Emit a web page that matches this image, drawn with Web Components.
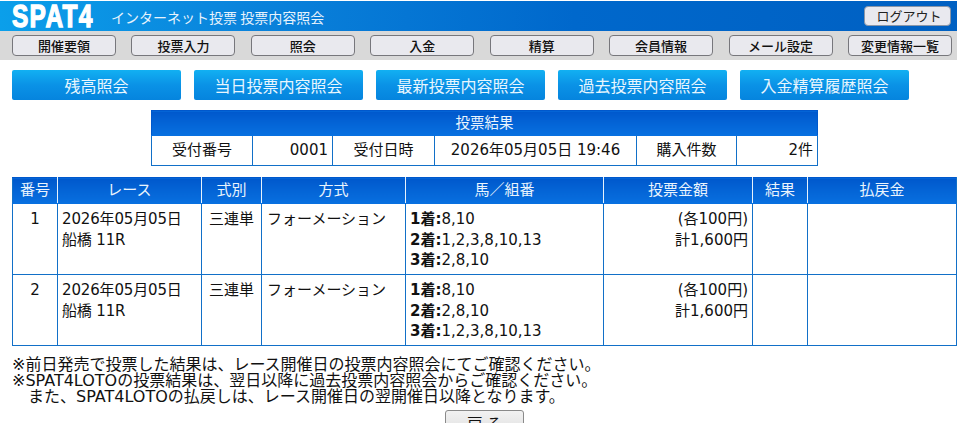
<!DOCTYPE html>
<html lang="ja"><head><meta charset="utf-8"><title>投票内容照会</title>
<style>
html,body{margin:0;padding:0;background:#fff}
body{font-family:"DejaVu Sans","Noto Sans CJK JP",sans-serif;color:#111}
</style></head><body>
<spat-page>
  <spat-header slot="header" title-text="インターネット投票 投票内容照会"></spat-header>
  <spat-nav slot="nav">
    <nav-btn>開催要領</nav-btn><nav-btn>投票入力</nav-btn><nav-btn>照会</nav-btn><nav-btn>入金</nav-btn>
    <nav-btn>精算</nav-btn><nav-btn>会員情報</nav-btn><nav-btn>メール設定</nav-btn><nav-btn>変更情報一覧</nav-btn>
  </spat-nav>
  <sub-nav slot="sub">
    <blue-btn>残高照会</blue-btn><blue-btn>当日投票内容照会</blue-btn><blue-btn>最新投票内容照会</blue-btn>
    <blue-btn>過去投票内容照会</blue-btn><blue-btn>入金精算履歴照会</blue-btn>
  </sub-nav>
  <result-summary slot="summary"></result-summary>
  <bet-table slot="bets"></bet-table>
  <note-list slot="notes"></note-list>
  <back-btn slot="back">戻 る</back-btn>
</spat-page>
<script>
const def=(name,html,init)=>customElements.define(name,class extends HTMLElement{
  constructor(){super();this.attachShadow({mode:'open'}).innerHTML=html;}
  connectedCallback(){init&&init(this);}
});
def('spat-page',`<style>
:host{display:block;width:957px;height:423px;overflow:hidden}
.s{display:flex;justify-content:center;margin-top:5px;padding-left:12px}
</style>
<slot name="header"></slot><slot name="nav"></slot><slot name="sub"></slot><slot name="summary"></slot><slot name="bets"></slot><slot name="notes"></slot>
<div class="s"><slot name="back"></slot></div>`);
def('spat-header',`<style>
:host{display:flex;align-items:center;height:30px;margin-top:1px;padding:0 6px 0 12px;box-sizing:border-box;
background:linear-gradient(90deg,#0b9fea 0,#0a84dc 25%,#0068cc 60%,#0060c2 100%);color:#fff}
.logo{font:bold 26px/30px "Liberation Sans",sans-serif;flex:none;display:block;width:92px;margin-right:-8px;transform:scale(.94,1.2);transform-origin:0 50%;white-space:nowrap;-webkit-text-stroke:1.1px #fff;letter-spacing:1.4px}
.t{margin-left:15px;font:14px/16px "Noto Sans CJK JP",sans-serif;color:#e6f2fc;flex:1;padding-top:2px}
.out{width:87px;height:20px;box-sizing:border-box;background:#e9e9ef;border:1px solid #8a96a8;border-radius:4px;color:#222;
font:13px/18px "Noto Sans CJK JP",sans-serif;text-align:center;margin-top:-1px;padding-left:3px}
</style><span class="logo">SPAT4</span><span class="t"></span><span class="out">ログアウト</span>`,
el=>el.shadowRoot.querySelector('.t').textContent=el.getAttribute('title-text'));
def('spat-nav',`<style>
:host{display:flex;justify-content:space-between;height:29px;box-sizing:border-box;padding:4px 5px 0 12px;background:#d9d9d9}
</style><slot></slot>`);
def('nav-btn',`<style>
:host{display:block;width:104px;height:21px;box-sizing:border-box;background:#e9e9ee;border:1px solid #77777c;border-radius:4px;
font:500 13px/20px "Noto Sans CJK JP",sans-serif;color:#111;text-align:center}
</style><slot></slot>`);
def('sub-nav',`<style>
:host{display:flex;gap:13px;padding:10px 0 0 12px}
</style><slot></slot>`);
def('blue-btn',`<style>
:host{display:block;width:169px;height:30px;background:linear-gradient(#12b0f2,#0a92e6 50%,#0584de);border-radius:2px;
color:#e8f6fe;font:16px/30px "Noto Sans CJK JP",sans-serif;text-align:center}
</style><slot></slot>`);
const tbl=`table{border-collapse:collapse;table-layout:fixed;font:15px/20.5px "DejaVu Sans","Noto Sans CJK JP",sans-serif;color:#111}
th{background:linear-gradient(#0058cc,#0870e0);color:#eaf4fd;font-weight:normal;height:25px;padding:0;border:1px solid #1270c8;border-top-color:#0058cc;border-bottom-color:#0870e0}
td{border:1px solid #1270c8;padding:0}`;
def('result-summary',`<style>
:host{display:block;margin:10px 0 0 151px}
${tbl}
table{width:667px}
th{border-left-color:#0058cc;border-right-color:#0058cc;height:24px;font-size:14.5px}
td{height:29px;text-align:center}
.r{text-align:right;padding-right:4px}
</style><table><colgroup><col style="width:101px"><col style="width:80px"><col style="width:102px"><col style="width:202px"><col style="width:100px"><col></colgroup>
<tr><th colspan="6">投票結果</th></tr>
<tr><td>受付番号</td><td class="r">0001</td><td>受付日時</td><td>2026年05月05日 19:46</td><td>購入件数</td><td class="r">2件</td></tr></table>`);
const row=(n,a,b,c)=>`<tr><td class="c">${n}</td><td class="l d">2026年05月05日<br>船橋 11R</td><td class="c">三連単</td><td class="l f">フォーメーション</td>
<td class="l m"><b>1着:</b>${a}<br><b>2着:</b>${b}<br><b>3着:</b>${c}</td><td class="r">(各100円)<br>計1,600円</td><td></td><td></td></tr>`;
def('bet-table',`<style>
:host{display:block;margin:11px 0 0 12px}
${tbl}
table{width:945px}
th{border-color:#0058cc #fff #0870e0;border-left-color:#e8f2fc;border-right-color:#e8f2fc}
th:first-child{border-left-color:#1270c8}th:last-child{border-right-color:#1270c8}
td{height:71px;vertical-align:top;padding-top:5px;box-sizing:border-box}
.c{text-align:center}.l{padding-left:4px}.r{text-align:right;padding-right:4px}
.d{letter-spacing:-.15px}.f{padding-left:5px}
.m{padding-left:4px;white-space:nowrap}
b{font-weight:bold}
</style><table><colgroup><col style="width:45px"><col style="width:144px"><col style="width:60px"><col style="width:144px"><col style="width:198px"><col style="width:149px"><col style="width:55px"><col></colgroup>
<tr><th>番号</th><th>レース</th><th>式別</th><th>方式</th><th>馬／組番</th><th>投票金額</th><th>結果</th><th>払戻金</th></tr>
${row(1,'8,10','1,2,3,8,10,13','2,8,10')}${row(2,'8,10','2,8,10','1,2,3,8,10,13')}</table>`);
def('note-list',`<style>
:host{display:block;margin:11px 0 0 12px;font:16px/16px "DejaVu Sans","Noto Sans CJK JP",sans-serif;color:#111;white-space:nowrap}
div{margin:0}.i{padding-left:16px}
</style><div>※前日発売で投票した結果は、レース開催日の投票内容照会にてご確認ください。</div>
<div>※SPAT4LOTOの投票結果は、翌日以降に過去投票内容照会からご確認ください。</div>
<div class="i">また、SPAT4LOTOの払戻しは、レース開催日の翌開催日以降となります。</div>`);
def('back-btn',`<style>
:host{display:block;width:79px;height:26px;box-sizing:border-box;background:linear-gradient(#f2f2f2,#dedede);border:1px solid #8a8a8a;border-radius:3px;
font:16px/24px "Noto Sans CJK JP",sans-serif;color:#111;text-align:center}
</style><slot></slot>`);
</script></body></html>
